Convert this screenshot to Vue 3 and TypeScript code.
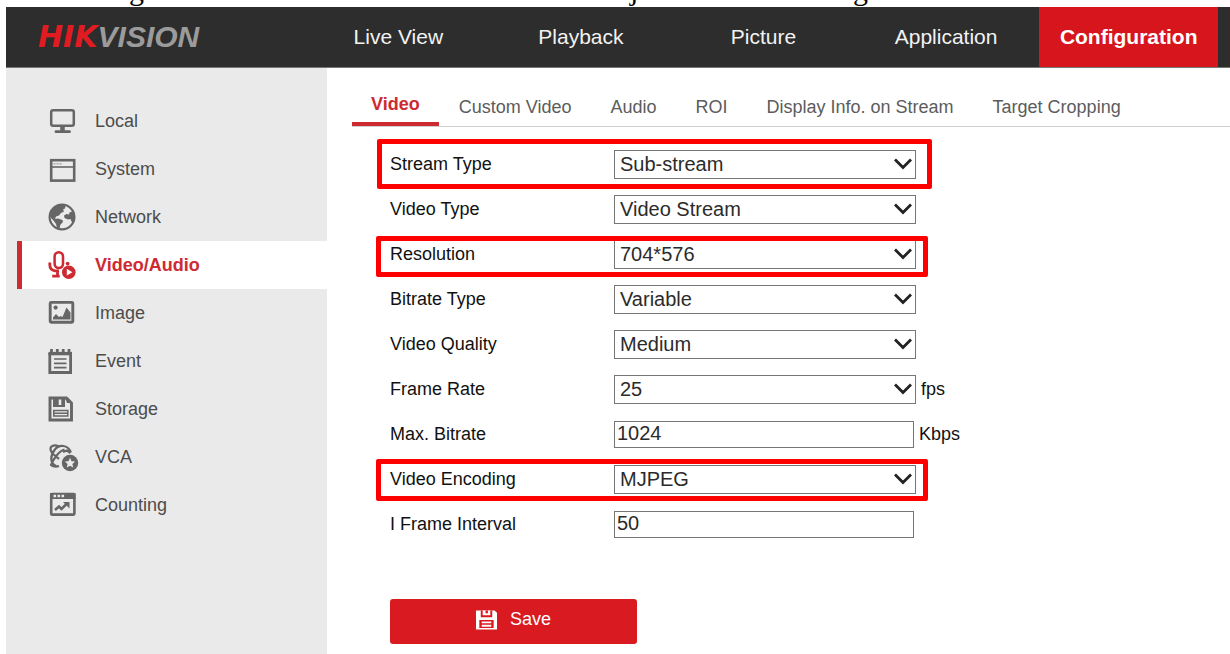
<script setup lang="ts">
import { reactive } from 'vue'

interface MenuItem {
  name: string
  icon: string
}

interface Field {
  id: string
  label: string
  kind: 'select' | 'input'
  value: string
  unit?: string
  mark?: 'wide' | 'upper' | 'lower'
}

const navItems: string[] = ['Live View', 'Playback', 'Picture', 'Application', 'Configuration']
const activeNav = 'Configuration'

const menu: MenuItem[] = [
  { name: 'Local', icon: 'monitor' },
  { name: 'System', icon: 'window' },
  { name: 'Network', icon: 'globe' },
  { name: 'Video/Audio', icon: 'mic' },
  { name: 'Image', icon: 'image' },
  { name: 'Event', icon: 'notepad' },
  { name: 'Storage', icon: 'disk' },
  { name: 'VCA', icon: 'vca' },
  { name: 'Counting', icon: 'chart' },
]
const activeMenu = 'Video/Audio'

const tabs: string[] = ['Video', 'Custom Video', 'Audio', 'ROI', 'Display Info. on Stream', 'Target Cropping']
const activeTab = 'Video'

const fields = reactive<Field[]>([
  { id: 'stream-type', label: 'Stream Type', kind: 'select', value: 'Sub-stream', mark: 'wide' },
  { id: 'video-type', label: 'Video Type', kind: 'select', value: 'Video Stream' },
  { id: 'resolution', label: 'Resolution', kind: 'select', value: '704*576', mark: 'upper' },
  { id: 'bitrate-type', label: 'Bitrate Type', kind: 'select', value: 'Variable' },
  { id: 'video-quality', label: 'Video Quality', kind: 'select', value: 'Medium' },
  { id: 'frame-rate', label: 'Frame Rate', kind: 'select', value: '25', unit: 'fps' },
  { id: 'max-bitrate', label: 'Max. Bitrate', kind: 'input', value: '1024', unit: 'Kbps' },
  { id: 'video-encoding', label: 'Video Encoding', kind: 'select', value: 'MJPEG', mark: 'lower' },
  { id: 'i-frame', label: 'I Frame Interval', kind: 'input', value: '50' },
])
</script>

<template>
  <div class="page">
    <div class="caption"><span>g</span><span>j</span><span>g</span></div>

    <div class="app">
      <header class="topbar">
        <a class="logo" href="#"><b>HIK</b><span>VISION</span></a>
        <nav class="nav">
          <a v-for="n in navItems" :key="n" href="#" :class="{ active: n === activeNav }">{{ n }}</a>
        </nav>
      </header>

      <div class="body">
        <aside class="sidebar">
          <a v-for="m in menu" :key="m.name" href="#" class="item" :class="{ active: m.name === activeMenu }">
            <svg class="icon" viewBox="0 0 28 28" aria-hidden="true" fill="none" stroke="currentColor" stroke-width="2.5">
              <template v-if="m.icon === 'monitor'">
                <rect x="3.2" y="3.2" width="22.6" height="15.6" rx="2" />
                <path d="M14.5 19v5" stroke-width="4.5" />
                <path d="M8 24.7h13.5" stroke-width="2.8" stroke-linecap="round" />
              </template>
              <template v-else-if="m.icon === 'window'">
                <rect x="3.2" y="5.2" width="23" height="20.4" stroke-width="2.6" />
                <path d="M3 12h23" stroke-width="1.6" />
                <path d="M5.5 8.8h9" stroke-width="1.6" stroke-dasharray="2 1" opacity="0.5" />
              </template>
              <template v-else-if="m.icon === 'globe'">
                <circle cx="14" cy="14" r="12.4" stroke-width="2.2" />
                <path d="M2 13C2 6 8 1.500 14 1.500l3.500 1-.5 3-2 1 1 2-3 1.500-2 2.500-3 1-1 2.500 3-.5 4.500 1.500.5 2-2.500 2.500-1 4-2.500-.5L8 21l-2.500-3.500L3 15z" fill="currentColor" stroke="none" />
                <path d="M26.500 10v6l-1.500 3.500-1.500-1-1-2.500-2.500.5-3.500-1.500-.5-2.500 2.500-1.500 2.500.5.5-2 2-1z" fill="currentColor" stroke="none" />
              </template>
              <template v-else-if="m.icon === 'mic'">
                <rect x="6.600" y="1.200" width="8.400" height="15.800" rx="4.200" />
                <path d="M1.800 11.500v2.500c0 3.200 2 5.200 5.200 5.900h4M9.500 20v5M4.200 25.200h7.500" stroke-width="2.800" />
                <circle cx="19.600" cy="12.600" r="1.900" fill="currentColor" stroke="none" />
                <circle cx="20.800" cy="21.200" r="6.800" fill="currentColor" stroke="none" />
                <path d="M18.800 17.800l5.600 3.400-5.600 3.400z" fill="#fff" stroke="none" />
              </template>
              <template v-else-if="m.icon === 'image'">
                <rect x="2.200" y="3.400" width="22.600" height="19.800" rx="1" stroke-width="2.900" />
                <circle cx="7.600" cy="8.600" r="2.100" fill="currentColor" stroke="none" />
                <path d="M5 20.500v-2l3-3.500 3 3 1.500-1 2 1 4-9.500 4 5v7z" fill="currentColor" stroke="none" />
              </template>
              <template v-else-if="m.icon === 'notepad'">
                <path d="M1.800 6v19.500h20.800V6" stroke-width="2.800" />
                <path d="M.5 6.600h23.500" stroke-width="3.400" />
                <path d="M3.500 2v5M9.300 2v5M15.200 2v5M21 2v5" stroke-width="2.800" />
                <path d="M6 12h12.500M6 16.300h12.500M6 20.600h12.500" stroke-width="1.700" />
              </template>
              <template v-else-if="m.icon === 'disk'">
                <path d="M2 3h16.500l5 5v17H2z" stroke-width="2.900" />
                <path d="M5 3h12v9H5z" fill="currentColor" stroke="none" />
                <path d="M17 3h2l5 5h-5z" fill="currentColor" stroke="none" />
                <path d="M12 4.500v5.500" stroke="#eaeaea" stroke-width="2.600" />
                <path d="M5.800 15.500h14v5.500h-14zM5.800 18.300h14" stroke-width="1.500" />
              </template>
              <template v-else-if="m.icon === 'vca'">
                <path d="M23 9.500C20 1.500 11 1 6.500 7S2 20 8 23M11 3.500C6 1 1 3 3 8c1.500 4 5 5 8 8M16.500 6.500c-5 1-11 9-13.500 15.500 1 1.500 5 2 8 1M15 9l4-1.500 3.500 2.500" stroke-width="2.200" />
                <circle cx="22" cy="20" r="8.200" fill="currentColor" stroke="none" />
                <path d="M22 14.800l1.500 3.400 3.700.4-2.800 2.400.8 3.600-3.200-1.900-3.200 1.900.8-3.600-2.800-2.400 3.700-.4z" fill="#eaeaea" stroke="none" />
              </template>
              <template v-else>
                <rect x="3.200" y="3" width="23.200" height="20.600" rx="1" stroke-width="2.600" />
                <path d="M2 2h25.500v6H2z" fill="currentColor" stroke="none" />
                <path d="M5.500 5h11" stroke="#eaeaea" stroke-width="2.600" stroke-dasharray="2.600 1.400" />
                <path d="M7 19l4-3.500 2.500 2.500 5-5" stroke-width="2.600" />
                <path d="M15 11h6.500v6.500z" fill="currentColor" stroke="none" />
              </template>
            </svg>
            <span>{{ m.name }}</span>
          </a>
        </aside>

        <main class="content">
          <nav class="tabs">
            <a v-for="t in tabs" :key="t" href="#" :class="{ active: t === activeTab }">{{ t }}</a>
          </nav>

          <form class="form" @submit.prevent>
            <div v-for="f in fields" :key="f.id" class="row">
              <label :for="f.id">{{ f.label }}</label>
              <div class="control">
                <div v-if="f.kind === 'select'" class="select">
                  <select :id="f.id" v-model="f.value">
                    <option :value="f.value">{{ f.value }}</option>
                  </select>
                  <svg class="chevron" viewBox="0 0 18 12" aria-hidden="true">
                    <path d="M1 1.500 9 9.500l8-8" fill="none" stroke="#222" stroke-width="2.800" />
                  </svg>
                </div>
                <input v-else :id="f.id" v-model="f.value" type="text" />
                <span v-if="f.unit">{{ f.unit }}</span>
              </div>
              <div v-if="f.mark" class="mark" :class="f.mark"></div>
            </div>

            <button class="save" type="submit">
              <svg viewBox="0 0 22 20" aria-hidden="true">
                <path d="M0 0h19.500l2.500 2.500V20H0z" fill="#fff" />
                <path d="M5 0h12v7H5zM3.500 10h15v8.500h-15z" fill="#d91a20" />
                <path d="M7 0h8v5H7z" fill="#fff" />
                <path d="M10 0h2.500v3H10z" fill="#d91a20" />
                <path d="M6 11.500h10v2H6zM6 15h10v2H6z" fill="#fff" />
              </svg>
              <span>Save</span>
            </button>
          </form>
        </main>
      </div>
    </div>
  </div>
</template>

<style>
body {
  background: #fff;
}
</style>

<style scoped>
.page {
  box-sizing: border-box;
  display: flex;
  flex-direction: column;
  min-height: 100vh;
  padding-left: 6px;
  font-family: "Liberation Sans", Arial, sans-serif;
  font-size: 18px;
}
a {
  color: inherit;
  text-decoration: none;
}
.caption {
  display: grid;
  grid-template-columns: 501px 223px 1fr;
  align-content: end;
  height: 7px;
  padding-left: 123px;
  overflow: hidden;
  font: 30px/34px "Liberation Serif", "Times New Roman", serif;
  color: #000;
}
.app {
  flex: 1;
  display: flex;
  flex-direction: column;
}
.topbar {
  display: flex;
  height: 60px;
  background: #2d2d2d;
  border-bottom: 1px solid #777;
  color: #f2f2f2;
}
.logo {
  flex: 0 0 271px;
  display: flex;
  align-items: baseline;
  padding-left: 32px;
  font: italic bold 30px/60px "Liberation Sans", Arial, sans-serif;
  color: #9b9b9b;
}
.logo b {
  font-family: "DejaVu Sans", Verdana, sans-serif;
  color: #e01b22;
}
.nav {
  flex: 1;
  display: grid;
  grid-template-columns: repeat(5, 1fr);
  gap: 4px;
  margin-right: 12px;
  font-size: 21px;
  line-height: 60px;
  text-align: center;
}
.nav .active {
  background: #d7151c;
  color: #fff;
  font-weight: bold;
}
.body {
  flex: 1;
  display: flex;
}
.sidebar {
  flex: 0 0 310px;
  padding: 29px 0 0 11px;
  background: #eaeaea;
  color: #4c4c4c;
}
.item {
  display: flex;
  align-items: center;
  gap: 19px;
  height: 48px;
  padding-left: 26px;
  border-left: 5px solid transparent;
}
.item.active {
  background: #fff;
  border-color: #cd2a31;
  color: #cd2a31;
  font-weight: bold;
}
.icon {
  width: 28px;
  height: 28px;
  color: #666;
  overflow: visible;
}
.item.active .icon {
  color: #cd2a31;
}
.content {
  flex: 1;
  min-width: 0;
  padding: 18px 0 0 25px;
}
.tabs {
  display: flex;
  gap: 1px;
  height: 40px;
  border-bottom: 1px solid #cfcfcf;
  color: #5c5c5c;
  line-height: 42px;
  white-space: nowrap;
}
.tabs a {
  padding: 0 19px;
}
.tabs .active {
  border-bottom: 4px solid #cd2a31;
  color: #cd2a31;
  font-weight: bold;
  line-height: 36px;
}
.form {
  padding: 15px 0 10px 38px;
  color: #111;
}
.row {
  position: relative;
  display: grid;
  grid-template-columns: 224px 1fr;
  align-items: center;
  height: 45px;
}
.control {
  display: flex;
  align-items: center;
  gap: 5px;
}
.select {
  position: relative;
  width: 302px;
}
.select select,
.control input {
  box-sizing: border-box;
  display: block;
  margin: 0;
  border: 1px solid #767676;
  border-radius: 0;
  background: #fff;
  color: #2b2b2b;
  font: 20px/24px "Liberation Sans", Arial, sans-serif;
}
.select select {
  width: 100%;
  height: 29px;
  padding: 0 24px 2px 5px;
  appearance: none;
}
.control input {
  width: 300px;
  height: 27px;
  padding: 0 2px 2px;
}
.chevron {
  position: absolute;
  top: 8px;
  right: 4px;
  width: 18px;
  height: 12px;
  pointer-events: none;
}
.mark {
  position: absolute;
  left: -14px;
  box-sizing: border-box;
  width: 552px;
  border: 5px solid #fe0000;
  border-radius: 2px;
  pointer-events: none;
}
.mark.wide {
  top: -3px;
  left: -13px;
  width: 555px;
  height: 50px;
}
.mark.upper {
  top: 4px;
  height: 41px;
}
.mark.lower {
  top: 2px;
  height: 42px;
}
.save {
  display: flex;
  align-items: center;
  justify-content: center;
  gap: 13px;
  width: 247px;
  height: 45px;
  margin-top: 52px;
  padding: 0 0 4px;
  border: 0;
  border-radius: 3px;
  background: #d91a20;
  color: #fff;
  font: 18px "Liberation Sans", Arial, sans-serif;
}
.save svg {
  width: 21px;
  height: 20px;
}
</style>
